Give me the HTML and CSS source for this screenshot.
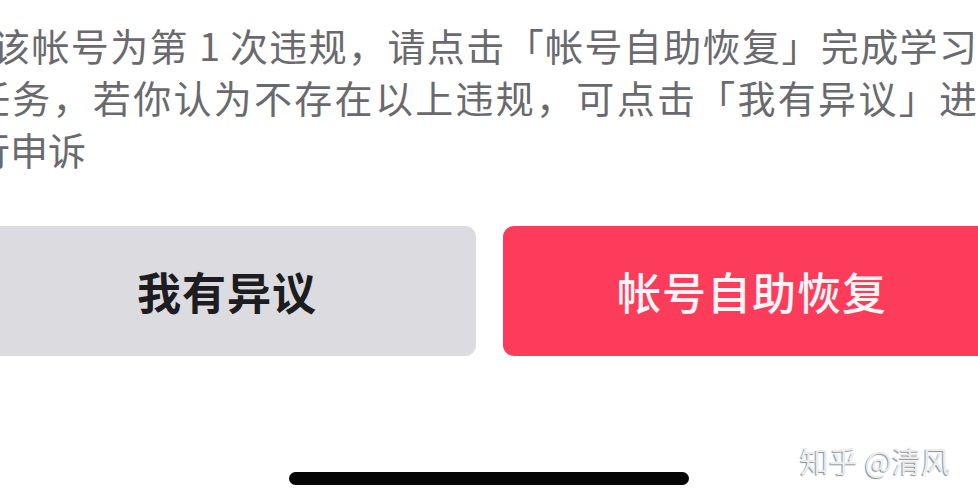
FILE: index.html
```html
<!DOCTYPE html>
<html lang="zh-CN">
<head>
<meta charset="utf-8">
<title>帐号违规</title>
<link rel="stylesheet" href="styles.css">
</head>
<body>
<div class="screen">
  <p class="msg">
    <span class="line line-first">该帐号为第 1 次违规，请点击「帐号自助恢复」完成学习</span>
    <span class="line line-justify">任务，若你认为不存在以上违规，可点击「我有异议」进</span>
    <span class="line">行申诉</span>
  </p>
  <div class="actions">
    <button class="btn btn-secondary" type="button">我有异议</button>
    <button class="btn btn-primary" type="button">帐号自助恢复</button>
  </div>
  <div class="home-bar"></div>
  <div class="watermark">知乎 @清风</div>
</div>
</body>
</html>
```

FILE: styles.css
```css
html, body {
  margin: 0;
  padding: 0;
  background: #ffffff;
}

.screen {
  position: relative;
  width: 978px;
  height: 500px;
  overflow: hidden;
  background: #ffffff;
  font-family: "Noto Sans CJK SC", "Noto Sans", sans-serif;
}

.msg {
  margin: 19px 0 0 -28px;
  width: 1005px;
  font-size: 38px;
  line-height: 52px;
  color: #6a6a6e;
}

.line {
  display: block;
  white-space: nowrap;
}

.line-first {
  padding-left: 20px;
  text-align: justify;
  text-align-last: justify;
  white-space: normal;
}

.line-justify {
  text-align: justify;
  text-align-last: justify;
  white-space: normal;
}

.actions {
  display: flex;
  gap: 27px;
  margin: 51px 0 0 -22px;
}

.btn {
  flex: 0 0 498px;
  height: 130px;
  border: none;
  border-radius: 11px;
  font-family: "Noto Sans CJK SC", "Noto Sans", sans-serif;
  font-size: 44px;
  font-weight: 500;
  letter-spacing: 1px;
  padding: 0;
}

.btn-secondary {
  background: #dcdce0;
  color: #1c1c21;
  font-weight: 600;
}

.btn-primary {
  background: #fd3b5b;
  color: #fff4f6;
}

.home-bar {
  width: 400px;
  height: 13px;
  margin: 116px auto 0;
  border-radius: 7px;
  background: #050505;
}

.watermark {
  position: absolute;
  left: 800px;
  top: 438px;
  font-size: 29px;
  line-height: 44px;
  color: #ececec;
  text-shadow: -1px 1px 1px #8f8f8f;
  white-space: nowrap;
}
```
